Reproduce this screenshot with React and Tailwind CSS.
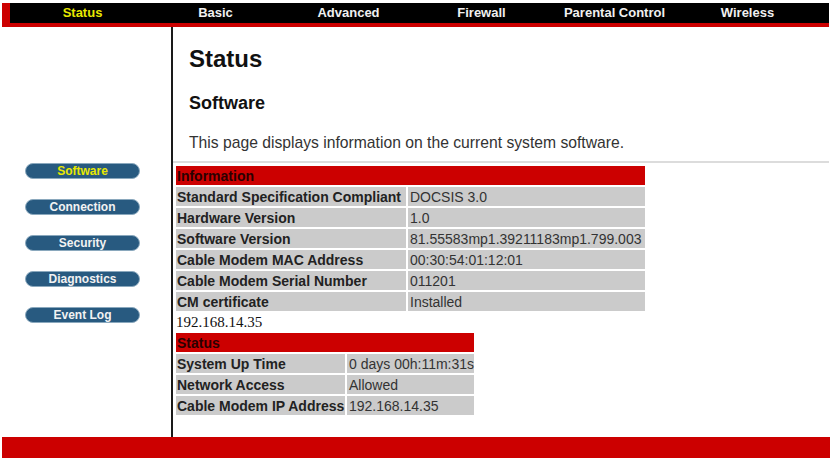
import React from "react";

const navItems = ["Status", "Basic", "Advanced", "Firewall", "Parental Control", "Wireless"];
const sideItems = ["Software", "Connection", "Security", "Diagnostics", "Event Log"];

const infoRows = [
  ["Standard Specification Compliant", "DOCSIS 3.0"],
  ["Hardware Version", "1.0"],
  ["Software Version", "81.55583mp1.39211183mp1.799.003"],
  ["Cable Modem MAC Address", "00:30:54:01:12:01"],
  ["Cable Modem Serial Number", "011201"],
  ["CM certificate", "Installed"],
];

const statusRows = [
  ["System Up Time", "0 days 00h:11m:31s"],
  ["Network Access", "Allowed"],
  ["Cable Modem IP Address", "192.168.14.35"],
];

function InfoTable({ title, rows, cols }) {
  return (
    <div className={`grid ${cols} gap-[2px] text-[14px] leading-[20px]`}>
      <div className="col-span-2 h-[19px] bg-[#cc0000] pl-[1px] font-bold text-[#2a0000]">{title}</div>
      {rows.map(([k, v]) => (
        <React.Fragment key={k}>
          <div className="h-[19px] bg-[#cbcbcb] pl-[1px] font-bold text-[#222] whitespace-nowrap">{k}</div>
          <div className="h-[19px] bg-[#cbcbcb] pl-[2px] text-[#333] whitespace-nowrap">{v}</div>
        </React.Fragment>
      ))}
    </div>
  );
}

export default function App() {
  return (
    <div className="relative h-[462px] w-[832px] overflow-hidden bg-white font-['Liberation_Sans',Arial,sans-serif]">
      <div className="mx-[2px] mt-[3px] flex h-[24px] w-[827px] border-b-[4px] border-l-[8px] border-[#cc0000] bg-black">
        <div className="flex pl-[6px]">
          {navItems.map((n, i) => (
            <div
              key={n}
              className={`w-[133px] text-center text-[13px] font-bold leading-[20px] ${i === 0 ? "text-[#e8e800]" : "text-[#f0f0f0]"}`}
            >
              {n}
            </div>
          ))}
        </div>
      </div>

      <div className="flex h-[410px]">
        <div className="w-[173px] shrink-0 border-r-2 border-[#1a1a1a] pt-[136px] pl-[25px]">
          <div className="flex w-[115px] flex-col gap-[20px]">
            {sideItems.map((s, i) => (
              <div
                key={s}
                className={`h-[16px] rounded-[8px] border border-[#8aa8bd] bg-[#285a80] text-center text-[12px] font-bold leading-[14px] ${i === 0 ? "text-[#e8e800]" : "text-[#f2f2f2]"}`}
              >
                {s}
              </div>
            ))}
          </div>
        </div>

        <div className="flex-1">
          <h1 className="mt-[18px] pl-[16px] text-[24px] font-bold leading-[27px] text-[#111]">Status</h1>
          <h2 className="mt-[21px] pl-[16px] text-[18px] font-bold leading-[21px] text-[#111]">Software</h2>
          <p className="mt-[20px] pl-[16px] text-[15.7px] leading-[18px] text-[#333]">
            This page displays information on the current system software.
          </p>
          <div className="mt-[9px] mr-[3px] h-[2px] bg-[#dcdcdc]" />
          <div className="mt-[3px] pl-[3px]">
            <InfoTable title="Information" rows={infoRows} cols="w-[469px] grid-cols-[230px_237px]" />
            <div className="mt-[2px] font-['Liberation_Serif','Times_New_Roman',serif] text-[15px] leading-[18px] text-[#111]">
              192.168.14.35
            </div>
            <div className="mt-[2px]">
              <InfoTable title="Status" rows={statusRows} cols="w-[298px] grid-cols-[169px_127px]" />
            </div>
          </div>
        </div>
      </div>

      <div className="mx-[2px] h-[21px] w-[828px] bg-[#cc0000]" />
    </div>
  );
}
